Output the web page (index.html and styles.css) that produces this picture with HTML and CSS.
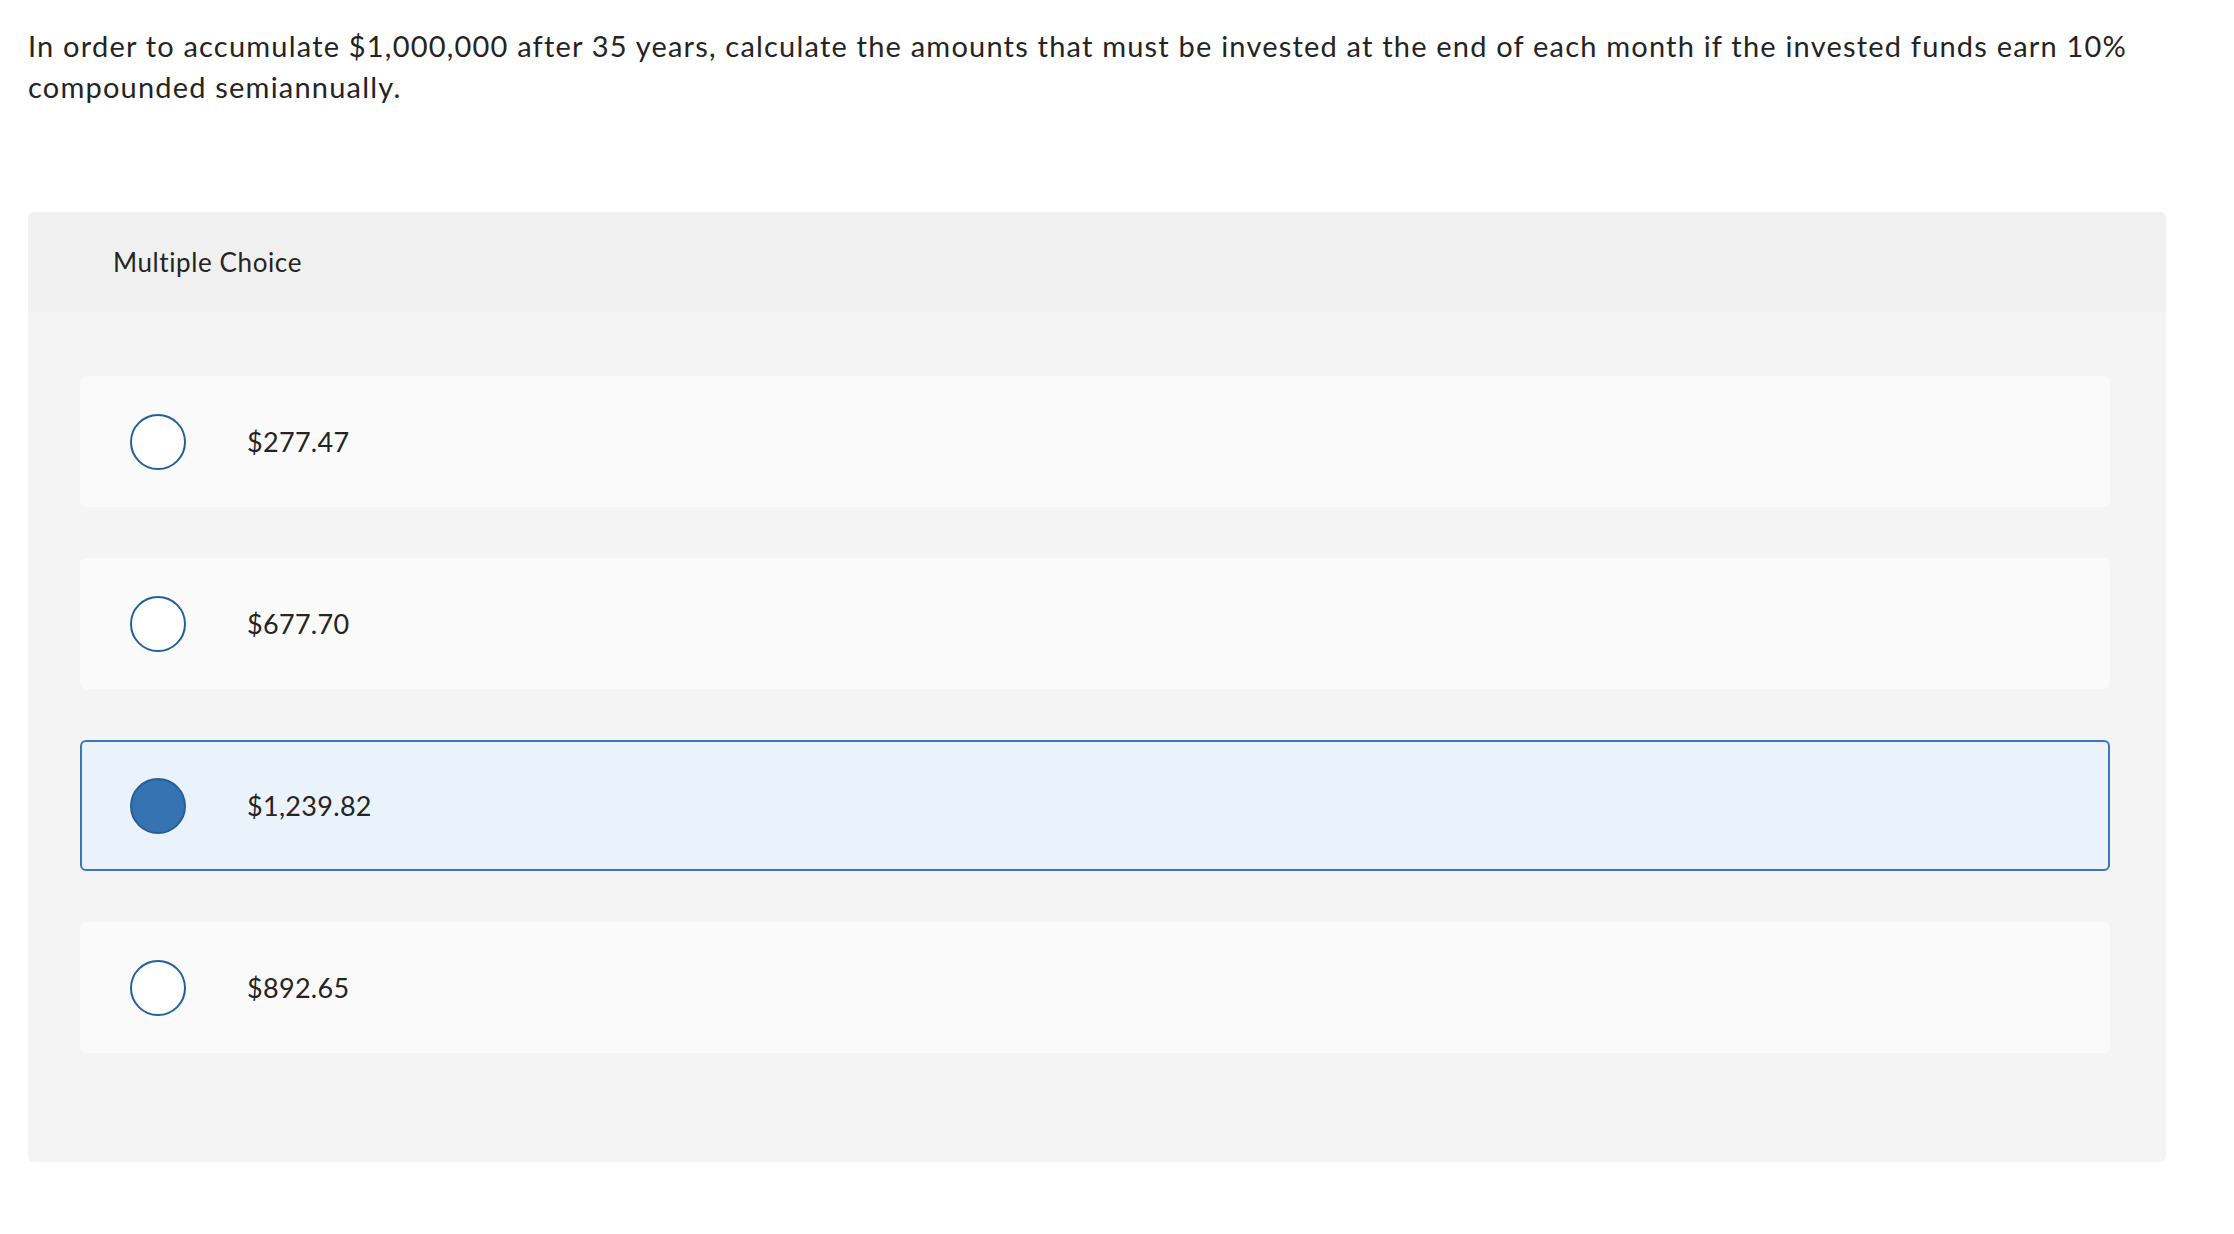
FILE: index.html
```html
<!DOCTYPE html>
<html lang="en">
<head>
<meta charset="utf-8">
<title>Multiple Choice</title>
<link rel="stylesheet" href="styles.css">
</head>
<body>
<main class="page">
  <p class="question">In order to accumulate $1,000,000 after 35 years, calculate the amounts that must be invested at the end of each month if the invested funds earn 10% compounded semiannually.</p>
  <section class="panel">
    <header class="panel-head">Multiple Choice</header>
    <div class="choices">
      <div class="choice"><span class="radio"></span><span class="label">$277.47</span></div>
      <div class="choice"><span class="radio"></span><span class="label">$677.70</span></div>
      <div class="choice selected"><span class="radio"></span><span class="label">$1,239.82</span></div>
      <div class="choice"><span class="radio"></span><span class="label">$892.65</span></div>
    </div>
  </section>
</main>
</body>
</html>
```

FILE: styles.css
```css
html, body {
  margin: 0;
  padding: 0;
  background: #ffffff;
}
body {
  font-family: Lato, "Open Sans", "Liberation Sans", sans-serif;
  color: #242424;
}
.page {
  width: 2138px;
  padding: 25px 0 0 28px;
}
.question {
  margin: 0;
  font-size: 29px;
  line-height: 41px;
  letter-spacing: 1.2px;
  width: 2138px;
}
.panel {
  margin-top: 105px;
  background: #f4f4f4;
  border-radius: 6px;
  overflow: hidden;
}
.panel-head {
  height: 100px;
  background: #f0f0f0;
  display: flex;
  align-items: center;
  padding-left: 85px;
  font-size: 26px;
  letter-spacing: 0.6px;
}
.choices {
  display: flex;
  flex-direction: column;
  gap: 51px;
  padding: 64px 56px 109px 52px;
}
.choice {
  height: 131px;
  box-sizing: border-box;
  background: #fafafa;
  border-radius: 6px;
  display: flex;
  align-items: center;
  padding-left: 50px;
}
.choice.selected {
  background: #eaf2fb;
  border: 2px solid #3a76b8;
  padding-left: 48px;
}
.radio {
  width: 56px;
  height: 56px;
  box-sizing: border-box;
  border-radius: 50%;
  border: 2px solid #22609c;
  background: #ffffff;
  flex: none;
}
.choice.selected .radio {
  background: #3673b3;
  border-color: #285e97;
}
.label {
  margin-left: 61px;
  font-size: 27px;
  letter-spacing: 0.3px;
}
```
